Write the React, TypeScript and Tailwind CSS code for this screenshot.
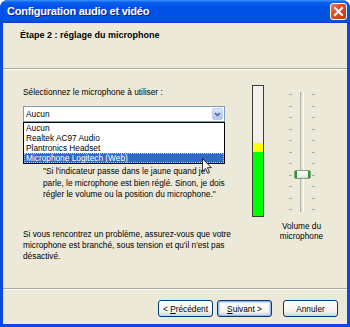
import React from "react";

const ui = { fontFamily: '"Liberation Sans", Arial, sans-serif' };

/* ---------------- pieces -------------- */
function CloseButton() {
  return (
    <div className="w-[17px] h-[17px] rounded-[3px] border border-white bg-[linear-gradient(135deg,#ec7a5a_0%,#e2502d_35%,#d4401e_75%,#c0341a_100%)] flex items-center justify-center">
      <svg width="11" height="11" viewBox="0 0 11 11">
        <path d="M2 2 L9 9 M9 2 L2 9" stroke="white" strokeWidth="2" strokeLinecap="square" />
      </svg>
    </div>
  );
}

function Cursor() {
  return (
    <svg
      width="10"
      height="16"
      viewBox="0 0 12 19"
      className="absolute left-[178px] top-[35px]"
    >
      <path
        d="M0.5 0.5 L0.5 16 L4.2 12.4 L6.8 18.2 L9 17.2 L6.5 11.5 L11.2 11.5 Z"
        fill="white"
        stroke="black"
        strokeWidth="1"
        strokeLinejoin="miter"
      />
    </svg>
  );
}

function ComboBox() {
  const items = ["Aucun", "Realtek AC97 Audio", "Plantronics Headset", "Microphone Logitech (Web)"];
  return (
    <div className="relative w-[202px]">
      <div className="h-[16px] border border-[#7f9db9] bg-white flex items-center pl-[2px] pr-[1px]">
        <span className="flex-1 leading-[10px]">Aucun</span>
        <div className="w-[11px] h-[12px] rounded-[2px] bg-[linear-gradient(180deg,#dce7fd_0%,#c1d3fb_50%,#b0c5f4_100%)] border border-[#bccbf0] flex items-center justify-center">
          <svg width="7" height="5" viewBox="0 0 7 5">
            <path d="M1 1 L3.5 3.5 L6 1" stroke="#4d6185" strokeWidth="1.5" fill="none" />
          </svg>
        </div>
      </div>
      {/* popup list */}
      <div className="absolute left-0 top-[16px] w-[202px] border border-black bg-white z-10">
        {items.map((t, i) => (
          <div
            key={t}
            className={`h-[10px] leading-[10px] pl-[2px] ${
              i === 3 ? "bg-[#316ac5] text-white outline-1 outline-dotted outline-[#b8c8e8] -outline-offset-1" : ""
            }`}
          >
            {t}
          </div>
        ))}
        <Cursor />
      </div>
    </div>
  );
}

function Meter() {
  return (
    <div className="w-[12px] h-[132px] border border-[#3c3c3c] bg-[#f1f0ea] flex flex-col justify-end">
      <div className="h-[9px] bg-[#ffff00]" />
      <div className="h-[64px] bg-[#00ff00]" />
    </div>
  );
}

function Slider() {
  const ticks = Array.from({ length: 11 });
  return (
    <div className="relative w-[26px] h-[120px] flex justify-between">
      <div className="flex flex-col justify-between py-[2px]">
        {ticks.map((_, i) => (
          <div key={i} className="w-[3px] h-px bg-[#a9a9a9]" />
        ))}
      </div>
      <div className="w-[4px] h-full border-l border-[#b5b3a8] border-r border-r-white bg-[#e6e4da]" />
      <div className="flex flex-col justify-between py-[2px]">
        {ticks.map((_, i) => (
          <div key={i} className="w-[3px] h-px bg-[#a9a9a9]" />
        ))}
      </div>
      {/* thumb */}
      <div className="absolute left-[5px] top-[78px] w-[17px] h-[9px] rounded-[2px] border border-[#8e9a8a] bg-[linear-gradient(180deg,#ffffff_0%,#f2f2ee_60%,#dcdcd4_100%)] flex justify-between">
        <div className="w-[2px] h-full bg-[#21a121]" />
        <div className="w-[2px] h-full bg-[#21a121]" />
      </div>
    </div>
  );
}

function XpButton({ children, def }: { children: React.ReactNode; def?: boolean }) {
  return (
    <button
      className={`w-[55px] h-[17px] rounded-[3px] border border-[#003c74] bg-[linear-gradient(180deg,#ffffff_0%,#f4f3ee_70%,#d6d0c5_100%)] text-black leading-[10px] ${
        def ? "shadow-[inset_0_0_0_1px_#9bb6ec,inset_0_0_0_2px_#c8d8f7]" : ""
      }`}
    >
      {children}
    </button>
  );
}

/* ---------------- App -------------- */
export default function App() {
  return (
    <div style={ui} className="w-[350px] h-[327px] flex flex-col bg-[#0a4ae0] rounded-t-[8px] overflow-hidden text-[8.3px] text-black">
      {/* title bar */}
      <div className="h-[23px] flex items-center justify-between pl-[7px] pr-[3px] bg-[linear-gradient(180deg,#3d95ff_0%,#0a5ff0_10%,#0052e6_30%,#0050e2_60%,#0056ea_85%,#0a40c8_100%)]">
        <span className="text-white font-bold text-[11px] tracking-[-0.25px] [text-shadow:1px_1px_0_#0a1e8a]">
          Configuration audio et vidéo
        </span>
        <CloseButton />
      </div>

      <div className="flex-1 mx-[3px] mb-[3px] bg-[#ece9d8] flex flex-col">
        {/* header */}
        <div className="h-[45px] pl-[17px] pt-[7px]">
          <div className="font-bold text-[9px] leading-[11px]">Étape 2 : réglage du microphone</div>
        </div>
        <div className="border-t border-[#aca899] border-b border-b-white" />

        {/* content */}
        <div className="h-[218px] flex">
          <div className="w-[229px] pl-[20px] pt-[17px] flex flex-col">
            <div className="leading-[11px]">Sélectionnez le microphone à utiliser :</div>
            <div className="mt-[8px]">
              <ComboBox />
            </div>
            <div className="mt-[44px] pl-[20px] leading-[11.5px]">
              "Si l'indicateur passe dans le jaune quand je
              <br />
              parle, le microphone est bien réglé. Sinon, je dois
              <br />
              régler le volume ou la position du microphone."
            </div>
            <div className="mt-[28px] leading-[11px] whitespace-nowrap">
              Si vous rencontrez un problème, assurez-vous que votre
              <br />
              microphone est branché, sous tension et qu'il n'est pas
              <br />
              désactivé.
            </div>
          </div>

          <div className="pt-[15px] pl-[20px]">
            <Meter />
          </div>
          <div className="pl-[19px] pt-[22px] flex flex-col items-center w-[64px] -ml-[4px]">
            <Slider />
            <div className="mt-[9px] leading-[10px] text-center">
              Volume du
              <br />
              microphone
            </div>
          </div>
        </div>

        <div className="border-t border-[#aca899] border-b border-b-white" />

        {/* buttons */}
        <div className="flex-1 flex items-start justify-end pt-[10px] pr-[9px]">
          <XpButton>
            &lt; <span className="underline">P</span>récédent
          </XpButton>
          <div className="ml-[4px]">
            <XpButton def>
              <span className="underline">S</span>uivant &gt;
            </XpButton>
          </div>
          <div className="ml-[11px]">
            <XpButton>Annuler</XpButton>
          </div>
        </div>
      </div>
    </div>
  );
}
